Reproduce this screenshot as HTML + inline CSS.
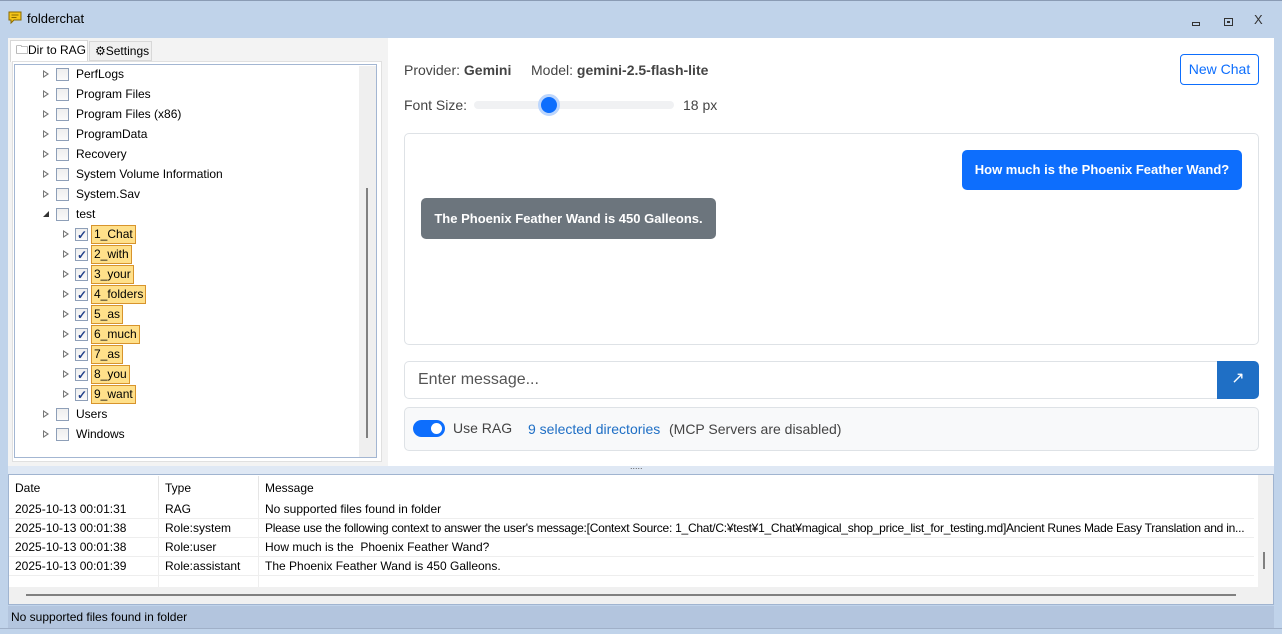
<!DOCTYPE html>
<html><head><meta charset="utf-8"><style>
*{box-sizing:border-box;margin:0;padding:0}
body{width:1282px;height:634px;overflow:hidden;background:#c0d3ea;font-family:"Liberation Sans",sans-serif;position:relative;font-size:12px;color:#000}
.a{position:absolute;white-space:nowrap}
.row{position:absolute;height:20px;line-height:20px;white-space:nowrap}
.tri{position:absolute;width:0;height:0;border-left:6px solid #777;border-top:4px solid transparent;border-bottom:4px solid transparent;top:6px}
.tri:after{content:"";position:absolute;left:-5px;top:-2px;border-left:3px solid #fff;border-top:2px solid transparent;border-bottom:2px solid transparent}
.cb{position:absolute;width:13px;height:13px;border:1px solid #8e9fb8;background:linear-gradient(#eee,#fafafa);top:4px}
.cb.c:after{content:"✓";position:absolute;left:1px;top:-4px;font-size:12px;color:#1f3f8a;font-weight:bold}
.lbl{position:absolute;top:1px;height:19px;line-height:17px;padding:0 2px;background:#ffe08a;border:1px solid #d8942c}
.lg{position:absolute;height:19px;line-height:19px;border-bottom:1px solid #eee;width:1245px;left:9px;overflow:hidden;white-space:nowrap}
.lg span{position:absolute}
</style></head><body>
<div class="a" style="left:0;top:0;width:1282px;height:1px;background:#8a9bb4"></div>
<svg class="a" style="left:8px;top:11px" width="14" height="14" viewBox="0 0 14 14"><path d="M1 1h12v8H6l-3 3v-3H1z" fill="#f5c518" stroke="#8a6a00"/><path d="M3.5 4h7M3.5 6.5h5" stroke="#8a6a00"/></svg>
<div class="a" style="left:27px;top:11px;font-size:13px">folderchat</div>
<div class="a" style="left:1192px;top:22px;width:8px;height:4px;border:1px solid #333"></div>
<div class="a" style="left:1224px;top:18px;width:9px;height:8px;border:1px solid #333"><div style="margin:2px;width:3px;height:2px;border:1px solid #333"></div></div>
<div class="a" style="left:1254px;top:12px;font-size:13px;color:#333">X</div>
<div class="a" style="left:8px;top:38px;width:380px;height:428px;background:#f3f3f3"></div>
<div class="a" style="left:10px;top:40px;width:78px;height:22px;background:#fff;border:1px solid #d8d8d8;border-bottom:none;line-height:19px;padding-left:5px">🗀Dir to RAG</div>
<div class="a" style="left:89px;top:41px;width:63px;height:20px;background:#f0f0f0;border:1px solid #d8d8d8;line-height:19px;padding-left:5px">⚙Settings</div>
<div class="a" style="left:12px;top:61px;width:370px;height:401px;background:#fff;border:1px solid #e0e0e0"></div>
<div class="a" style="left:14px;top:64px;width:363px;height:394px;background:#fff;border:1px solid #a3b6d2"></div>
<div class="a" style="left:359px;top:66px;width:17px;height:391px;background:#efefef"></div>
<div class="a" style="left:366px;top:188px;width:2px;height:250px;background:#808080"></div>
<div class="row" style="left:0;top:64px;width:1px"><div class="tri" style="left:43px"></div><div class="cb" style="left:56px"></div><span class="a" style="left:76px">PerfLogs</span></div>
<div class="row" style="left:0;top:84px"><div class="tri" style="left:43px"></div><div class="cb" style="left:56px"></div><span class="a" style="left:76px">Program Files</span></div>
<div class="row" style="left:0;top:104px"><div class="tri" style="left:43px"></div><div class="cb" style="left:56px"></div><span class="a" style="left:76px">Program Files (x86)</span></div>
<div class="row" style="left:0;top:124px"><div class="tri" style="left:43px"></div><div class="cb" style="left:56px"></div><span class="a" style="left:76px">ProgramData</span></div>
<div class="row" style="left:0;top:144px"><div class="tri" style="left:43px"></div><div class="cb" style="left:56px"></div><span class="a" style="left:76px">Recovery</span></div>
<div class="row" style="left:0;top:164px"><div class="tri" style="left:43px"></div><div class="cb" style="left:56px"></div><span class="a" style="left:76px">System Volume Information</span></div>
<div class="row" style="left:0;top:184px"><div class="tri" style="left:43px"></div><div class="cb" style="left:56px"></div><span class="a" style="left:76px">System.Sav</span></div>
<div class="row" style="left:0;top:204px"><div class="a" style="left:43px;top:7px;border-right:6px solid #333;border-top:6px solid transparent"></div><div class="cb" style="left:56px"></div><span class="a" style="left:76px">test</span></div>
<div class="row" style="top:224px"><div class="tri" style="left:63px"></div><div class="cb c" style="left:75px"></div><div class="lbl" style="left:91px">1_Chat</div></div>
<div class="row" style="top:244px"><div class="tri" style="left:63px"></div><div class="cb c" style="left:75px"></div><div class="lbl" style="left:91px">2_with</div></div>
<div class="row" style="top:264px"><div class="tri" style="left:63px"></div><div class="cb c" style="left:75px"></div><div class="lbl" style="left:91px">3_your</div></div>
<div class="row" style="top:284px"><div class="tri" style="left:63px"></div><div class="cb c" style="left:75px"></div><div class="lbl" style="left:91px">4_folders</div></div>
<div class="row" style="top:304px"><div class="tri" style="left:63px"></div><div class="cb c" style="left:75px"></div><div class="lbl" style="left:91px">5_as</div></div>
<div class="row" style="top:324px"><div class="tri" style="left:63px"></div><div class="cb c" style="left:75px"></div><div class="lbl" style="left:91px">6_much</div></div>
<div class="row" style="top:344px"><div class="tri" style="left:63px"></div><div class="cb c" style="left:75px"></div><div class="lbl" style="left:91px">7_as</div></div>
<div class="row" style="top:364px"><div class="tri" style="left:63px"></div><div class="cb c" style="left:75px"></div><div class="lbl" style="left:91px">8_you</div></div>
<div class="row" style="top:384px"><div class="tri" style="left:63px"></div><div class="cb c" style="left:75px"></div><div class="lbl" style="left:91px">9_want</div></div>
<div class="row" style="top:404px"><div class="tri" style="left:43px"></div><div class="cb" style="left:56px"></div><span class="a" style="left:76px">Users</span></div>
<div class="row" style="top:424px"><div class="tri" style="left:43px"></div><div class="cb" style="left:56px"></div><span class="a" style="left:76px">Windows</span></div>
<div class="a" style="left:388px;top:38px;width:886px;height:428px;background:#fff;font-size:14px;color:#444">
 <div class="a" style="left:16px;top:24px">Provider: <b>Gemini</b></div>
 <div class="a" style="left:143px;top:24px">Model: <b>gemini-2.5-flash-lite</b></div>
 <div class="a" style="left:792px;top:16px;width:79px;height:31px;border:1px solid #0d6efd;border-radius:4px;color:#0d6efd;text-align:center;line-height:29px">New Chat</div>
 <div class="a" style="left:16px;top:59px">Font Size:</div>
 <div class="a" style="left:86px;top:63px;width:200px;height:8px;background:#f0f1f3;border-radius:4px"></div>
 <div class="a" style="left:150px;top:56px;width:22px;height:22px;border-radius:50%;background:#0d6efd;border:3px solid #bcd6fd"></div>
 <div class="a" style="left:295px;top:59px">18 px</div>
 <div class="a" style="left:16px;top:95px;width:855px;height:212px;border:1px solid #dee2e6;border-radius:5px"></div>
 <div class="a" style="left:574px;top:112px;width:280px;height:40px;background:#0d6efd;border-radius:5px;color:#fff;font-weight:bold;line-height:40px;text-align:center;font-size:13px">How much is the Phoenix Feather Wand?</div>
 <div class="a" style="left:33px;top:160px;width:295px;height:41px;background:#6c757d;border-radius:5px;color:#fff;font-weight:bold;line-height:41px;text-align:center;font-size:13px">The Phoenix Feather Wand is 450 Galleons.</div>
 <div class="a" style="left:16px;top:323px;width:814px;height:38px;border:1px solid #dee2e6;border-right:none;border-radius:5px 0 0 5px;font-size:16px;color:#555;line-height:36px;padding-left:13px">Enter message...</div>
 <div class="a" style="left:829px;top:323px;width:42px;height:38px;background:#1f6fc5;border-radius:0 5px 5px 0;color:#fff;text-align:center;line-height:36px;font-size:16px">↗</div>
 <div class="a" style="left:16px;top:369px;width:855px;height:44px;border:1px solid #dee2e6;border-radius:5px;background:#f8f9fa"></div>
 <div class="a" style="left:25px;top:382px;width:32px;height:17px;border-radius:9px;background:#0d6efd"><div style="position:absolute;right:3px;top:3px;width:11px;height:11px;border-radius:50%;background:#fff"></div></div>
 <div class="a" style="left:65px;top:382px">Use RAG</div>
 <div class="a" style="left:140px;top:383px;color:#1f6fc5">9 selected directories</div>
 <div class="a" style="left:281px;top:383px">(MCP Servers are disabled)</div>
</div>
<div class="a" style="left:1274px;top:38px;width:8px;height:590px;background:#c0d3ea"></div>
<div class="a" style="left:8px;top:466px;width:1266px;height:8px;background:#dfe8f4"></div>
<div class="a" style="left:630px;top:461px;font-size:9px;color:#555">.....</div>
<div class="a" style="left:8px;top:474px;width:1266px;height:131px;background:#f0f0f0;border:1px solid #a0b4d0"></div>
<div class="a" style="left:9px;top:475px;width:1249px;height:112px;background:#fff"></div>
<div class="a" style="left:158px;top:476px;width:1px;height:24px;background:#e5e5e5"></div>
<div class="a" style="left:258px;top:476px;width:1px;height:24px;background:#e5e5e5"></div>
<div class="a" style="left:15px;top:481px">Date</div><div class="a" style="left:165px;top:481px">Type</div><div class="a" style="left:265px;top:481px">Message</div>
<div class="lg" style="top:500px"><span style="left:6px">2025-10-13 00:01:31</span><span style="left:156px">RAG</span><span style="left:256px">No supported files found in folder</span></div>
<div class="lg" style="top:519px"><span style="left:6px">2025-10-13 00:01:38</span><span style="left:156px">Role:system</span><span style="left:256px;letter-spacing:-0.25px">Please use the following context to answer the user's message:[Context Source: 1_Chat/C:¥test¥1_Chat¥magical_shop_price_list_for_testing.md]Ancient Runes Made Easy Translation and in...</span></div>
<div class="lg" style="top:538px"><span style="left:6px">2025-10-13 00:01:38</span><span style="left:156px">Role:user</span><span style="left:256px">How much is the&nbsp; Phoenix Feather Wand?</span></div>
<div class="lg" style="top:557px"><span style="left:6px">2025-10-13 00:01:39</span><span style="left:156px">Role:assistant</span><span style="left:256px">The Phoenix Feather Wand is 450 Galleons.</span></div>
<div class="a" style="left:158px;top:500px;width:1px;height:87px;background:#eee"></div>
<div class="a" style="left:258px;top:500px;width:1px;height:87px;background:#eee"></div>
<div class="a" style="left:1263px;top:552px;width:2px;height:17px;background:#808080"></div>
<div class="a" style="left:26px;top:594px;width:1210px;height:2px;background:#808080"></div>
<div class="a" style="left:8px;top:606px;width:1266px;height:22px;background:#b3c5de;line-height:22px;padding-left:3px">No supported files found in folder</div>
<div class="a" style="left:0;top:628px;width:1282px;height:6px;background:#c0d3ea;border-top:1px solid #a0b0c8"></div>
</body></html>
